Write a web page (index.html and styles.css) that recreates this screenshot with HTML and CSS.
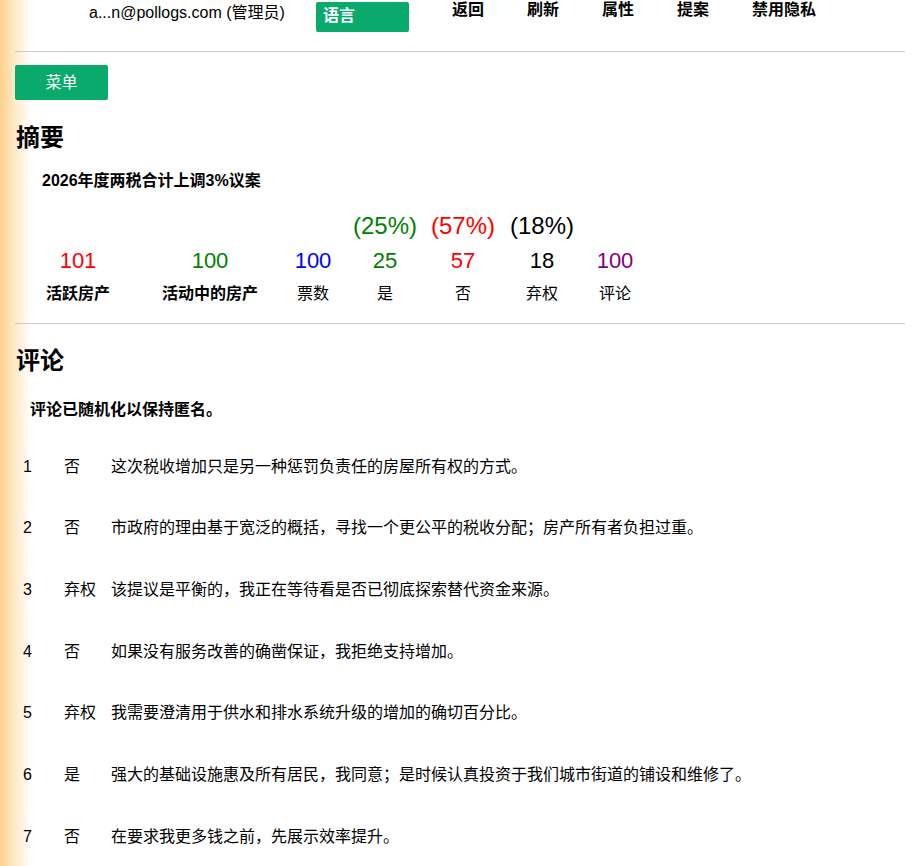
FILE: index.html
```html
<!DOCTYPE html>
<html lang="zh">
<head>
<meta charset="utf-8">
<title>摘要</title>
<link rel="stylesheet" href="styles.css">
</head>
<body>
<div class="page">
  <header class="topbar">
    <span class="user">a...n@pollogs.com (管理员)</span>
    <span class="lang-btn">语言</span>
    <nav class="nav">
      <a class="nav-link">返回</a>
      <a class="nav-link">刷新</a>
      <a class="nav-link">属性</a>
      <a class="nav-link">提案</a>
      <a class="nav-link">禁用隐私</a>
    </nav>
  </header>
  <hr class="rule">
  <div class="menu-row"><span class="menu-btn">菜单</span></div>

  <h2 class="section-title summary-title">摘要</h2>
  <div class="proposal">2026年度两税合计上调3%议案</div>

  <div class="stats">
    <div class="pct"></div><div class="pct"></div><div class="pct"></div>
    <div class="pct green">(25%)</div>
    <div class="pct red">(57%)</div>
    <div class="pct black">(18%)</div>
    <div class="pct"></div>

    <div class="num red">101</div>
    <div class="num green">100</div>
    <div class="num blue">100</div>
    <div class="num green">25</div>
    <div class="num red">57</div>
    <div class="num black">18</div>
    <div class="num purple">100</div>

    <div class="lbl bold">活跃房产</div>
    <div class="lbl bold">活动中的房产</div>
    <div class="lbl">票数</div>
    <div class="lbl">是</div>
    <div class="lbl">否</div>
    <div class="lbl">弃权</div>
    <div class="lbl">评论</div>
  </div>

  <hr class="rule rule2">

  <h2 class="section-title comments-title">评论</h2>
  <div class="note">评论已随机化以保持匿名。</div>

  <div class="comments">
    <div class="comment"><span class="c-no">1</span><span class="c-vote">否</span><span class="c-text">这次税收增加只是另一种惩罚负责任的房屋所有权的方式。</span></div>
    <div class="comment"><span class="c-no">2</span><span class="c-vote">否</span><span class="c-text">市政府的理由基于宽泛的概括，寻找一个更公平的税收分配；房产所有者负担过重。</span></div>
    <div class="comment"><span class="c-no">3</span><span class="c-vote">弃权</span><span class="c-text">该提议是平衡的，我正在等待看是否已彻底探索替代资金来源。</span></div>
    <div class="comment"><span class="c-no">4</span><span class="c-vote">否</span><span class="c-text">如果没有服务改善的确凿保证，我拒绝支持增加。</span></div>
    <div class="comment"><span class="c-no">5</span><span class="c-vote">弃权</span><span class="c-text">我需要澄清用于供水和排水系统升级的增加的确切百分比。</span></div>
    <div class="comment"><span class="c-no">6</span><span class="c-vote">是</span><span class="c-text">强大的基础设施惠及所有居民，我同意；是时候认真投资于我们城市街道的铺设和维修了。</span></div>
    <div class="comment"><span class="c-no">7</span><span class="c-vote">否</span><span class="c-text">在要求我更多钱之前，先展示效率提升。</span></div>
  </div>
</div>
</body>
</html>
```
FILE: styles.css
```css
html, body {
  margin: 0;
  padding: 0;
}
body {
  background: linear-gradient(to right, #fdd08c 0, #fee9c8 14px, #ffffff 32px) no-repeat;
  background-color: #fff;
  min-height: 866px;
  font-family: "Liberation Sans", Arial, "Noto Sans CJK SC", sans-serif;
  font-size: 15px;
  color: #000;
}
.page {
  padding: 0 19px 0 15px;
}
.topbar {
  display: flex;
  align-items: flex-start;
  height: 51px;
}
.user {
  margin-left: 74px;
  width: 227px;
  margin-top: 3px;
  font-size: 16px;
  line-height: 20px;
  white-space: nowrap;
}
.lang-btn {
  margin-top: 2px;
  width: 93px;
  height: 30px;
  box-sizing: border-box;
  padding: 4px 0 0 7px;
  background: #0aaa6d;
  color: #fff;
  font-weight: bold;
  font-size: 16px;
  line-height: 20px;
  border-radius: 2px;
}
.nav {
  display: flex;
  margin-left: 43px;
  margin-top: 0;
}
.nav-link {
  width: 75px;
  font-weight: bold;
  font-size: 16px;
  line-height: 20px;
  color: #000;
}
.rule {
  margin: 0;
  border: 0;
  height: 1px;
  background: #cccccc;
}
.menu-row {
  margin-top: 13px;
  height: 35px;
}
.menu-btn {
  display: inline-block;
  width: 93px;
  height: 35px;
  line-height: 35px;
  text-align: center;
  background: #0aaa6d;
  color: #fff;
  font-size: 16px;
  border-radius: 2px;
}
.section-title {
  margin: 0;
  font-size: 24px;
  line-height: 30px;
  font-weight: bold;
  padding-left: 1px;
}
.summary-title {
  margin-top: 23px;
}
.proposal {
  margin-top: 18px;
  margin-left: 27px;
  font-weight: bold;
  font-size: 16px;
  line-height: 20px;
}
.stats {
  display: grid;
  grid-template-columns: 96px 168px 38px 106px 50px 108px 38px;
  margin-left: 15px;
  margin-top: 21px;
  text-align: center;
  white-space: nowrap;
}
.pct {
  font-size: 24px;
  line-height: 28px;
  height: 28px;
}
.num {
  font-size: 22px;
  line-height: 26px;
  margin-top: 8px;
}
.lbl {
  font-size: 16px;
  line-height: 20px;
  margin-top: 10px;
}
.bold { font-weight: bold; }
.red { color: #ff0000; }
.green { color: #008000; }
.blue { color: #0000ff; }
.black { color: #000; }
.purple { color: #800080; }
.stats > div {
  display: flex;
  justify-content: center;
}
.rule2 {
  margin-top: 19px;
}
.comments-title {
  margin-top: 22px;
}
.note {
  margin-top: 24px;
  margin-left: 15px;
  font-weight: bold;
  font-size: 16px;
  line-height: 20px;
}
.comments {
  margin-top: 16px;
  margin-left: 8px;
}
.comment {
  display: flex;
  align-items: baseline;
  padding: 20.83px 0;
  line-height: 20px;
  font-size: 16px;
}
.c-no {
  width: 41px;
  flex: none;
  font-size: 16px;
}
.c-vote {
  width: 47px;
  flex: none;
}
.c-text {
  flex: 1;
}
```
